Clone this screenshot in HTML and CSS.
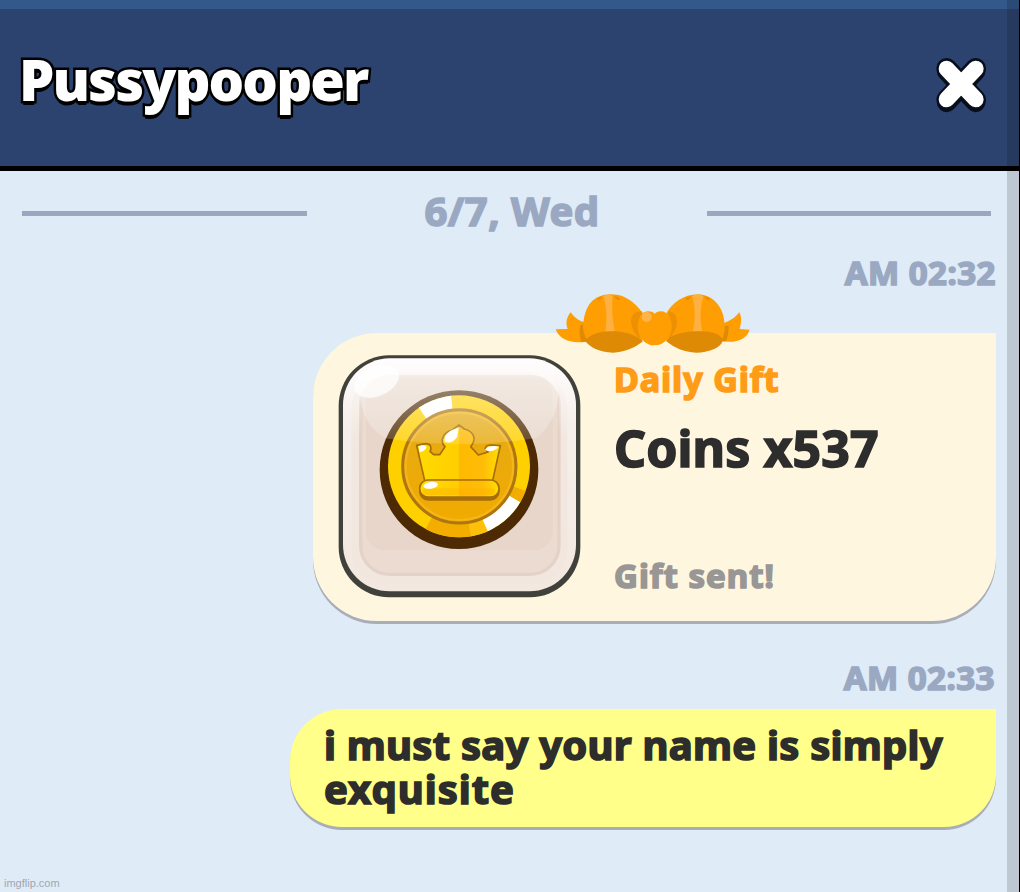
FILE: index.html
```html
<!DOCTYPE html>
<html lang="en">

<head>
  <meta charset="UTF-8">
  <meta name="viewport" content="width=device-width, initial-scale=1">
  <title>Messages</title>
  <link rel="stylesheet" href="styles.css">
</head>

<body>
  <div class="screen">
    <header class="topbar">
      <h1>Pussypooper</h1>
      <button class="close" aria-label="Close">
        <svg viewBox="105 168 156 171" width="52" height="57">
          <path d="M140 213L227 307M227 213L140 307" stroke="#080e1b" stroke-width="59" stroke-linecap="round"/>
          <path d="M140 205L227 299M227 205L140 299" stroke="#080e1b" stroke-width="62" stroke-linecap="round"/>
          <path d="M140 206L227 298M227 206L140 298" stroke="#fff" stroke-width="48" stroke-linecap="round"/>
        </svg>
      </button>
    </header>

    <main class="chat">
      <div class="date"><span>6/7, Wed</span></div>

      <time class="time time-a">AM 02:32</time>
      <section class="gift">
        <!-- bow -->
        <svg class="bow" viewBox="45 36 585 186" width="195" height="62">
          <path d="M136 127C118 124 102 111 92 97C80 110 76 130 83 147L47 148C58 178 90 192 138 185Z" fill="#fe9e02"/>
          <path d="M120 137Q116 160 124 186L142 185L136 127Z" fill="#df8a02"/>
          <path d="M548 130C568 124 587 112 598 97C607 113 603 132 599 147L629 149C619 177 594 190 544 184Z" fill="#fe9e02"/>
          <path d="M550 137L566 137Q566 165 558 184L540 184Z" fill="#df8a02"/>
          <path d="M129 140C133 75 160 44 213 43C262 43 290 76 309 100L306 184L145 184Q130 165 129 140Z" fill="#fe9e02"/>
          <path d="M379 100C397 70 429 43 474 43C520 44 553 83 554 135Q555 165 543 185L379 184Z" fill="#fe9e02"/>
          <path d="M190 48Q205 41 218 48Q213 95 224 154L196 155Q205 95 190 48Z" fill="#feb040"/>
          <path d="M457 48Q472 41 490 48Q476 95 486 154L459 154Q470 95 457 48Z" fill="#feb040"/>
          <path d="M222 49Q235 48 243 57Q229 66 222 49ZM187 49Q176 50 170 58Q182 63 187 49ZM454 49Q441 50 435 57Q449 66 454 49ZM492 49Q506 51 512 58Q499 65 492 49Z" fill="#f28a02"/>
          <path d="M304 94Q274 94 273 123Q275 153 297 174L317 150ZM387 94Q411 98 411 124Q411 151 388 177L377 145Z" fill="#ed9003"/>
          <path d="M136 184C146 163 180 154 215 154C250 154 281 161 309 184C281 205 256 216 219 218C176 217 149 201 136 184Z" fill="#df8a04"/>
          <path d="M379 184C390 164 431 154 478 154C520 154 546 164 548 183C540 206 505 217 469 218C431 216 403 204 379 184Z" fill="#df8a04"/>
          <path d="M344 101C359 88 379 93 389 110C408 149 383 196 343 196C304 196 281 149 299 111C307 94 329 88 344 101Z" fill="#fe9e02"/>
          <circle cx="320" cy="111" r="15" fill="#ffb34b"/>
        </svg>

        <!-- coin tile -->
        <svg class="tile" viewBox="84 75 729 729" width="243" height="243">
          <defs>
            <linearGradient id="glass" x1="0" y1="0" x2="0" y2="1">
              <stop offset="0" stop-color="#fffdfd"/>
              <stop offset=".3" stop-color="#f5eeea"/>
              <stop offset="1" stop-color="#f3e8df"/>
            </linearGradient>
            <linearGradient id="inset" x1="0" y1="0" x2="0" y2="1">
              <stop offset="0" stop-color="#fbf7f5"/>
              <stop offset=".3" stop-color="#f2e8e1"/>
              <stop offset="1" stop-color="#f2e7df"/>
            </linearGradient>
            <linearGradient id="rim" x1="0" y1="0" x2="0" y2="1">
              <stop offset="0" stop-color="#e5d2c7" stop-opacity="0"/>
              <stop offset=".3" stop-color="#e5d2c7"/>
            </linearGradient>
            <linearGradient id="shine" x1="0" y1="0" x2="0" y2="1">
              <stop offset="0" stop-color="#fff" stop-opacity=".48"/>
              <stop offset="1" stop-color="#fff" stop-opacity=".16"/>
            </linearGradient>
            <linearGradient id="disc" x1="0" y1="0" x2="0" y2="1">
              <stop offset="0" stop-color="#e4aa16"/>
              <stop offset="1" stop-color="#f1ab00"/>
            </linearGradient>
            <linearGradient id="crown">
              <stop offset="0" stop-color="#ffdb00"/>
              <stop offset=".5" stop-color="#ffce00"/>
              <stop offset=".5" stop-color="#ffb900"/>
              <stop offset=".8" stop-color="#ffbd08"/>
              <stop offset="1" stop-color="#ffe000"/>
            </linearGradient>
            <clipPath id="face"><circle cx="447" cy="409" r="213"/></clipPath>
          </defs>
          <rect x="86" y="76" width="725" height="726" rx="151" fill="#41413b"/>
          <rect x="99" y="85" width="699" height="699" rx="140" fill="url(#glass)"/>
          <rect x="124" y="130" width="648" height="634" rx="105" fill="url(#inset)"/>
          <rect x="152" y="134" width="595" height="599" rx="86" fill="#ebdbd1" stroke="url(#rim)" stroke-width="10"/>
          <rect x="168" y="140" width="560" height="521" rx="56" fill="#e7d6c9"/>

          <circle cx="447" cy="419" r="238" fill="#4d2a03"/>
          <g clip-path="url(#face)">
            <rect x="230" y="190" width="440" height="440" fill="#ffd000"/>
            <path d="M447 409L315 216L375 170L420 170Z" fill="#fff"/>
            <path d="M447 409L340 610L380 650L490 650Z" fill="#f2ad00"/>
            <path d="M447 409L488 650L550 620Z" fill="#ffc00c"/>
            <path d="M447 409L545 630L650 525Z" fill="#fff"/>
            <path d="M447 409L680 495L650 528Z" fill="#f2ad00"/>
          </g>
          <circle cx="448" cy="409" r="170" fill="url(#disc)" stroke="#ad7611" stroke-width="9"/>
          <circle cx="448" cy="409" r="161" fill="none" stroke="#f5b51c" stroke-width="6"/>
          <g stroke="#a66d0b" stroke-width="5" stroke-linejoin="round">
            <path d="M320 346L346 341C363 341 366 353 360 364L371 374H389L405 350C388 334 399 307 425 301L447 285L463 297C492 305 501 326 482 350L505 375L534 366C520 356 526 345 543 345L571 347L548 452H344Z" fill="url(#crown)"/>
            <rect x="329" y="456" width="238" height="54" rx="27" fill="#a66d0b"/>
            <rect x="329" y="450" width="238" height="51" rx="25" fill="url(#crown)"/>
          </g>
          <path d="M348 485H545" stroke="#ffb100" stroke-width="20" stroke-linecap="round" opacity=".45"/>
          <path d="M446 293C420 300 401 311 404 335Q426 344 442 320ZM326 349Q343 342 350 351Q345 364 329 367ZM566 350C551 345 528 349 525 361Q550 369 566 350Z" fill="#fff"/>
          <ellipse cx="362" cy="466" rx="22" ry="10" transform="rotate(-8 362 466)" fill="#fff"/>

          <path d="M151 188Q157 132 212 132H686Q742 139 745 188C744 250 715 297 677 325Q447 359 226 325C178 296 151 250 151 188Z" fill="url(#shine)"/>
          <ellipse cx="200" cy="154" rx="71" ry="44" transform="rotate(-24 200 154)" fill="#fff" opacity=".75"/>
        </svg>

        <div class="info">
          <h2>Daily Gift</h2>
          <p class="amount">Coins x537</p>
          <p class="sent">Gift sent!</p>
        </div>
      </section>

      <time class="time time-b">AM 02:33</time>
      <p class="bubble">i must say your name is simply <span>exquisite</span></p>
    </main>

    <footer>imgflip.com</footer>
    <div class="edge"></div>
  </div>
</body>

</html>
```
FILE: styles.css
```css
*{
  box-sizing: border-box;
  margin: 0;
  padding: 0;
}

body{
  font-family: "Noto Sans", "Open Sans", sans-serif;
  font-weight: 700;
  background: #dfebf7;
}
.screen{
  position: relative;
  width: 1020px;
  height: 892px;
  overflow: hidden;
  display: flex;
  flex-direction: column;
}

.topbar{
  height: 171px;
  flex: none;
  display: flex;
  justify-content: space-between;
  align-items: flex-start;
  padding: 48px 33px 0 19px;
  background: #2d436f;
  border-top: 9px solid #33598b;
  border-bottom: 5px solid #000;
}
.topbar h1{
  font-size: 56px;
  line-height: 60px;
  margin-top: -8px;
  color: #fff;
  font-weight: 900;
  letter-spacing: -1.9px;
  -webkit-text-stroke: 5px #000;
  paint-order: stroke fill;
  text-shadow: 0 4px 0 #000;
}
.close{
  border: 0;
  background: none;
  width: 52px;
  height: 57px;
  margin-top: -1px;
}
.close svg{
  display: block;
}

.chat{
  flex: 1;
  display: flex;
  flex-direction: column;
  align-items: flex-end;
  padding: 11px 24px 0 22px;
  /* rounds off the letter corners */
  -webkit-text-stroke: 1.6px currentColor;
  stroke-linejoin: round;
}
.date{
  width: 969px;
  margin-right: 5px;
  height: 62px;
  display: flex;
  justify-content: center;
  align-items: center;
  font-size: 40px;
  line-height: 58px;
  letter-spacing: .5px;
  color: #9aa9c1;
}
.date::before,
.date::after{
  content: "";
  width: 284px;
  height: 5px;
  background: #99a8bf;
}
.date::before{
  width: 285px;
}
.date span{
  width: 400px;
  height: 62px;
  padding-left: 10px;
  text-align: center;
}

.time{
  display: block;
  height: 40px;
  font-size: 33px;
  line-height: 38px;
  letter-spacing: .5px;
  color: #9aa9c1;
}
.time-a{
  margin-top: 10px;
}
.time-b{
  margin-top: 38px;
  padding-right: 1px;
}

.gift{
  position: relative;
  width: 683px;
  height: 288px;
  margin-top: 39px;
  display: flex;
  gap: 33px;
  padding: 22px 25px;
  background: #fff6e0;
  border-radius: 64px 0 64px 64px;
  box-shadow: 0 3px 0 #a9adb8;
}
.bow{
  position: absolute;
  left: 242px;
  top: -41px;
}
.tile{
  flex: none;
}
.info h2{
  font-size: 34px;
  line-height: 48px;
  font-weight: 700;
  letter-spacing: .9px;
  color: #ff9c17;
}
.amount{
  margin-top: 10px;
  font-size: 50px;
  line-height: 70px;
  letter-spacing: .1px;
  color: #2d2d2d;
}
.sent{
  margin-top: 69px;
  font-size: 33px;
  line-height: 48px;
  letter-spacing: 1px;
  color: #999795;
}

.bubble{
  width: 706px;
  height: 118px;
  margin-top: 10px;
  padding: 14px 24px 0 34px;
  font-size: 40px;
  line-height: 44px;
  letter-spacing: .25px;
  color: #2d2d2b;
  background: #ffff89;
  border-radius: 52px 0 52px 52px;
  box-shadow: 0 3px 0 #a9adb8;
}
.bubble span{
  letter-spacing: 1px;
}

footer{
  padding: 0 0 2px 4px;
  font: 400 11px/14px "Liberation Sans", Arial, sans-serif;
  color: #9fa7b0;
}

/* shaded strip over the right side */
.edge{
  position: absolute;
  right: 0;
  top: 0;
  width: 13px;
  height: 100%;
  background: rgba(0, 0, 0, .15);
  border-right: 1px solid #000;
}
```
